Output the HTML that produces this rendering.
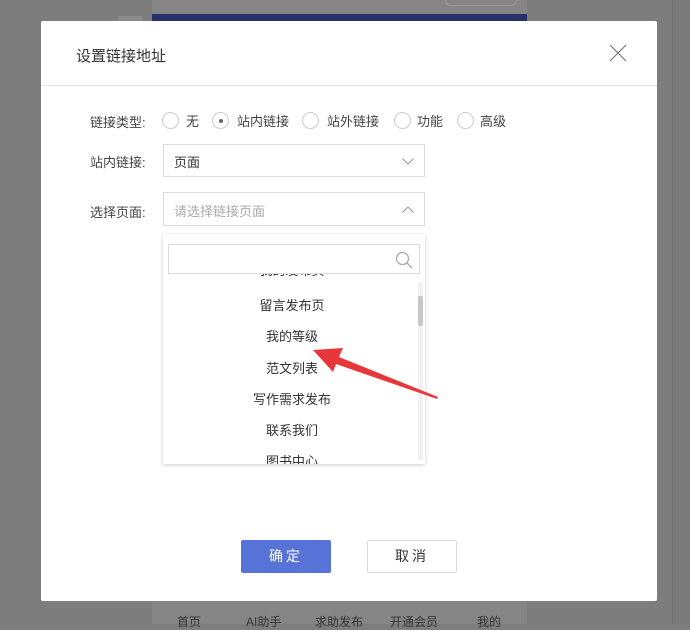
<!DOCTYPE html>
<html><head><meta charset="utf-8"><style>
*{box-sizing:border-box;margin:0;padding:0}
body{width:690px;height:624px;background:#7d7d7d;position:relative;overflow:hidden;font-family:"Liberation Sans","Noto Sans CJK SC",sans-serif;color:#333}
.abs{position:absolute}
.phone{left:152px;top:0;width:375px;height:624px;background:#858585}
.dlg{left:41px;top:21px;width:616px;height:580px;background:#fff;border-radius:2px}
.lbl{font-size:13px;color:#444}
.radio{position:absolute;width:17px;height:17px;border:1px solid #ccc;border-radius:50%;background:#fff}
.rt{position:absolute;font-size:13px;color:#444}
.sel{border:1px solid #dcdcdc;background:#fff;font-size:13px}
.item{width:258px;text-align:center;font-size:13px;color:#333;position:absolute;left:0}
</style></head><body>
<div class="abs phone"></div>
<div class="abs" style="left:152px;top:14px;width:375px;height:7px;background:#26306a"></div>
<div class="abs" style="left:445px;top:0;width:72px;height:6px;border:1px solid #999;border-top:none;border-radius:0 0 12px 12px"></div>
<div class="abs" style="left:672px;top:0;width:18px;height:624px;background:#7a7a7a;border-left:1px solid #727272"></div>
<div class="abs" style="left:118px;top:16px;width:24px;height:5px;background:#8a8a8a"></div>
<div class="abs" style="left:152px;top:601px;width:375px;height:23px;font-size:12px;color:#333">
<span class="abs" style="left:25px;top:12px">首页</span>
<span class="abs" style="left:94px;top:12px">AI助手</span>
<span class="abs" style="left:163px;top:12px">求助发布</span>
<span class="abs" style="left:238px;top:12px">开通会员</span>
<span class="abs" style="left:325px;top:12px">我的</span>
</div>
<div class="abs dlg">
<div class="abs" style="left:35px;top:24px;font-size:15px;color:#333">设置链接地址</div>
<svg class="abs" style="left:568px;top:23px" width="18" height="18"><path d="M1 1L17 17M17 1L1 17" stroke="#777" stroke-width="1.2"/></svg>
<div class="abs" style="left:0;top:64px;width:616px;height:1px;background:#e6e6e6"></div>
<div class="abs lbl" style="left:49px;top:91px">链接类型:</div>
<span class="radio" style="left:121px;top:91px"></span><span class="rt" style="left:145px;top:90px">无</span>
<span class="radio" style="left:171px;top:91px"><span style="position:absolute;left:6px;top:6px;width:4px;height:4px;border-radius:50%;background:#666"></span></span><span class="rt" style="left:196px;top:90px">站内链接</span>
<span class="radio" style="left:261px;top:91px"></span><span class="rt" style="left:286px;top:90px">站外链接</span>
<span class="radio" style="left:353px;top:91px"></span><span class="rt" style="left:376px;top:90px">功能</span>
<span class="radio" style="left:416px;top:91px"></span><span class="rt" style="left:439px;top:90px">高级</span>
<div class="abs lbl" style="left:49px;top:131px">站内链接:</div>
<div class="abs sel" style="left:122px;top:123px;width:262px;height:33px;padding:7px 10px">页面
<svg class="abs" style="right:10px;top:13px" width="12" height="7"><path d="M0.5 0.5L6 6L11.5 0.5" stroke="#999" fill="none"/></svg></div>
<div class="abs lbl" style="left:49px;top:181px">选择页面:</div>
<div class="abs sel" style="left:122px;top:171px;width:262px;height:34px;padding:8px 10px;color:#aaa">请选择链接页面
<svg class="abs" style="right:10px;top:13px" width="12" height="7"><path d="M0.5 6.5L6 1L11.5 6.5" stroke="#999" fill="none"/></svg></div>
<div class="abs" style="left:122px;top:213px;width:262px;height:230px;background:#fff;box-shadow:0 1px 4px rgba(0,0,0,.2);overflow:hidden">
<div class="abs" style="left:5px;top:10px;width:252px;height:30px;border:1px solid #dcdcdc"></div>
<svg class="abs" style="left:232px;top:17px" width="18" height="18"><circle cx="7.5" cy="7.5" r="6" stroke="#aaa" fill="none" stroke-width="1.3"/><path d="M12 12L17 17" stroke="#aaa" stroke-width="1.3"/></svg>
<div class="abs" style="left:0;top:40px;width:262px;height:190px;overflow:hidden">
<div class="item" style="top:-14px">我的发布页</div>
<div class="item" style="top:21px">留言发布页</div>
<div class="item" style="top:52px">我的等级</div>
<div class="item" style="top:84px">范文列表</div>
<div class="item" style="top:115px">写作需求发布</div>
<div class="item" style="top:146px">联系我们</div>
<div class="item" style="top:177px">图书中心</div>
</div>
<div class="abs" style="left:255px;top:48px;width:5px;height:178px;background:#f1f1f1"></div>
<div class="abs" style="left:255px;top:62px;width:5px;height:30px;background:#c8c8c8;border-radius:2px"></div>
</div>
</div>
<svg class="abs" style="left:0;top:0" width="690" height="624"><polygon points="313,350 343,348 339,357 438,397 437,399 336,364 333,372" fill="#e8373a"/></svg>
<div class="abs" style="left:241px;top:540px;width:90px;height:33px;background:#5873d8;border-radius:2px;color:#fff;font-size:14px;text-align:center;line-height:33px;letter-spacing:3px">确定</div>
<div class="abs" style="left:367px;top:540px;width:90px;height:33px;border:1px solid #dcdcdc;border-radius:2px;color:#333;font-size:14px;text-align:center;line-height:31px;letter-spacing:3px">取消</div>
</body></html>
